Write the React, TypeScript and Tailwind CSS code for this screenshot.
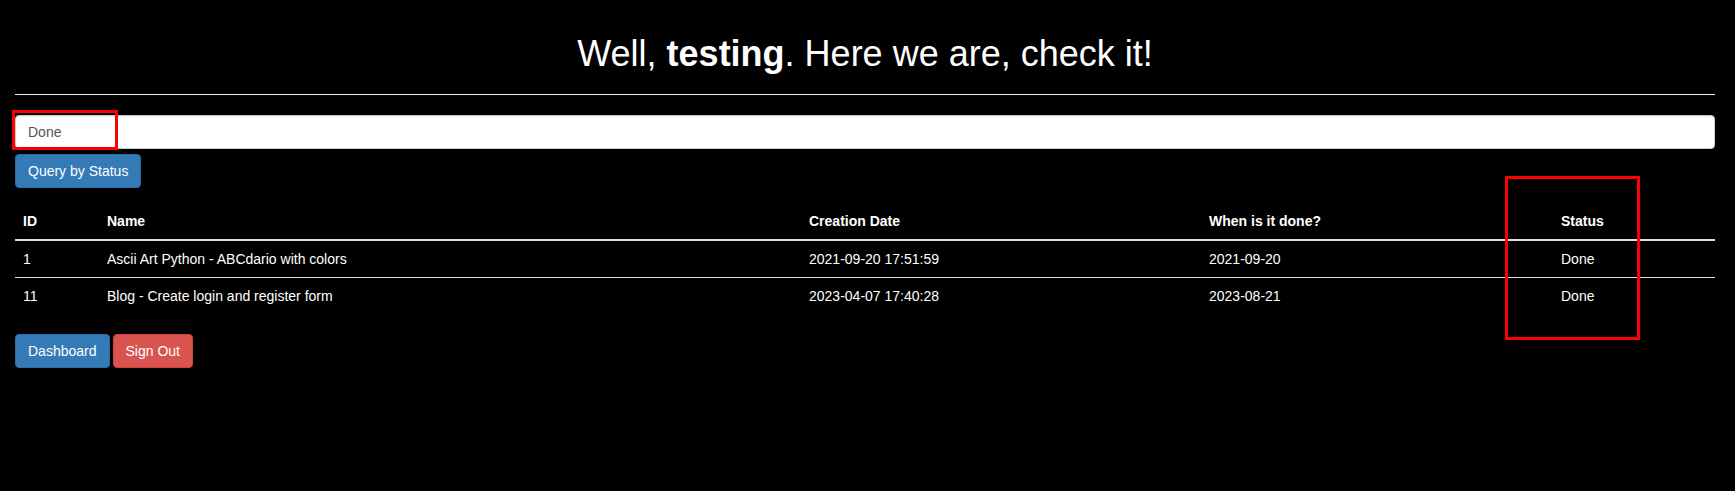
import React from "react";

const rows = [
  { id: "1", name: "Ascii Art Python - ABCdario with colors", created: "2021-09-20 17:51:59", done: "2021-09-20", status: "Done" },
  { id: "11", name: "Blog - Create login and register form", created: "2023-04-07 17:40:28", done: "2023-08-21", status: "Done" },
];

export default function App() {
  return (
    <div className="relative min-h-[491px] bg-black pl-[15px] pr-[20px] font-['Liberation_Sans',Arial,sans-serif] text-[14px] leading-[20px] text-white">
      <h1 className="m-0 pt-[34px] text-center text-[36px] font-normal leading-[40px] text-white">
        Well, <b className="font-bold">testing</b>. Here we are, check it!
      </h1>
      <hr className="mt-[20px] mb-0 border-0 border-t border-[#eeeeee]" />
      <input
        type="text"
        defaultValue="Done"
        className="mt-[20px] block h-[34px] w-full rounded-[4px] border border-[#cccccc] bg-white px-[12px] py-[6px] text-[14px] leading-[20px] text-[#555555] shadow-[inset_0_1px_1px_rgba(0,0,0,0.075)] outline-none"
      />
      <button className="mt-[5px] block h-[34px] rounded-[4px] border border-[#2e6da4] bg-[#337ab7] px-[12px] py-[6px] text-[14px] leading-[20px] text-white">
        Query by Status
      </button>
      <table className="mt-[15px] w-full table-fixed border-collapse">
        <thead>
          <tr>
            <th className="w-[84px] border-b-2 border-[#dddddd] p-[8px] text-left font-bold">ID</th>
            <th className="w-[702px] border-b-2 border-[#dddddd] p-[8px] text-left font-bold">Name</th>
            <th className="w-[400px] border-b-2 border-[#dddddd] p-[8px] text-left font-bold">Creation Date</th>
            <th className="w-[352px] border-b-2 border-[#dddddd] p-[8px] text-left font-bold">When is it done?</th>
            <th className="border-b-2 border-[#dddddd] p-[8px] text-left font-bold">Status</th>
          </tr>
        </thead>
        <tbody>
          {rows.map((r, i) => (
            <tr key={r.id} className={i > 0 ? "border-t border-[#dddddd]" : ""}>
              <td className="p-[8px]">{r.id}</td>
              <td className="p-[8px]">{r.name}</td>
              <td className="p-[8px]">{r.created}</td>
              <td className="p-[8px]">{r.done}</td>
              <td className="p-[8px]">{r.status}</td>
            </tr>
          ))}
        </tbody>
      </table>
      <div className="mt-[20px] flex gap-[3px]">
        <button className="h-[34px] rounded-[4px] border border-[#2e6da4] bg-[#337ab7] px-[12px] py-[6px] text-[14px] leading-[20px] text-white">
          Dashboard
        </button>
        <button className="h-[34px] rounded-[4px] border border-[#d43f3a] bg-[#d9534f] px-[12px] py-[6px] text-[14px] leading-[20px] text-white">
          Sign Out
        </button>
      </div>
      <div className="pointer-events-none absolute left-[12px] top-[110px] h-[40px] w-[106px] border-[3px] border-[#ff0000]" />
      <div className="pointer-events-none absolute left-[1505px] top-[176px] h-[164px] w-[135px] border-[3px] border-[#ff0000]" />
    </div>
  );
}
